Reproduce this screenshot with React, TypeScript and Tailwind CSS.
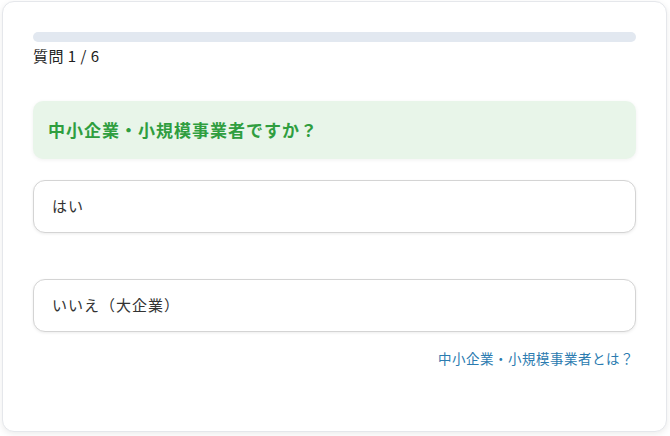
import { useState } from 'react';

const options = ['はい', 'いいえ（大企業）'];

const App = () => {
  const [selected, setSelected] = useState<number | null>(null);

  return (
    <div className="w-[670px] h-[436px] bg-white p-[2px] pt-[1px] font-['Noto_Sans_CJK_JP','Noto_Sans',sans-serif]">
      <div className="w-[665px] h-[431px] rounded-[12px] border border-[#e5e7eb] bg-white shadow-[0_2px_6px_rgba(0,0,0,0.08)] px-[30px] pt-[30px]">
        {/* 進捗バー */}
        <div className="h-[10px] w-full rounded-full bg-[#e2e8f0]" />
        <div className="mt-[3px] text-[15px] leading-[22px] text-[#222] tracking-[0.5px]">質問 1 / 6</div>

        {/* 質問 */}
        <div className="mt-[34px] h-[58px] rounded-[10px] bg-[#e8f5e9] shadow-[0_1px_4px_rgba(0,0,0,0.06)] px-[15px] flex items-center">
          <h2 className="text-[17px] font-bold text-[#2f9e3f] tracking-[1px]">中小企業・小規模事業者ですか？</h2>
        </div>

        <div className="mt-[21px] flex flex-col gap-[46px]">
          {options.map((opt, i) => (
            <button
              key={opt}
              onClick={() => setSelected(i)}
              className={`h-[53px] w-full rounded-[12px] border bg-white px-[18px] text-left text-[15px] tracking-[1px] text-[#333] shadow-[0_1px_3px_rgba(0,0,0,0.08)] ${
                selected === i ? 'border-[#4caf50]' : 'border-[#d4d4d4]'
              }`}
            >
              {opt}
            </button>
          ))}
        </div>

        <div className="mt-[16px] flex justify-end pr-[2px]">
          <a className="text-[13.5px] leading-[20px] tracking-[0.5px] text-[#2b7bb0] cursor-pointer">中小企業・小規模事業者とは？</a>
        </div>
      </div>
    </div>
  );
};

export default App;
